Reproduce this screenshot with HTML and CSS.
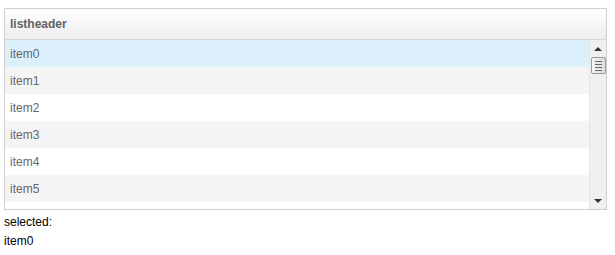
FILE: index.html
```html
<!DOCTYPE html>
<html lang="en">
<head>
    <meta charset="UTF-8">
    <title>List</title>
    <link rel="stylesheet" href="styles.css">
</head>
<body>
    <div class="listbox">
        <div class="list-header">listheader</div>
        <div class="list-body">
            <div class="list-items">
                <div class="list-item selected">item0</div>
                <div class="list-item odd">item1</div>
                <div class="list-item">item2</div>
                <div class="list-item odd">item3</div>
                <div class="list-item">item4</div>
                <div class="list-item odd">item5</div>
            </div>
            <div class="scrollbar">
                <div class="arrow arrow-up"></div>
                <div class="thumb">
                    <span></span><span></span><span></span><span></span>
                </div>
                <div class="track"></div>
                <div class="arrow arrow-down"></div>
            </div>
        </div>
    </div>
    <div class="result">
        <div>selected:</div>
        <div>item0</div>
    </div>
</body>
</html>
```

FILE: styles.css
```css
* {
    margin: 0;
    padding: 0;
    box-sizing: border-box;
}

body {
    margin: 8px 0 0 4px;
    font-family: "Liberation Sans", Arial, sans-serif;
    font-size: 12px;
    color: #000;
    background: #fff;
}

.listbox {
    width: 603px;
    height: 202px;
    border: 1px solid #cfcfcf;
    display: flex;
    flex-direction: column;
}

.list-header {
    height: 31px;
    padding: 0 5px;
    line-height: 30px;
    font-weight: bold;
    color: #636363;
    background: linear-gradient(#ffffff, #ededed);
    border-bottom: 1px solid #d6d6d6;
}

.list-body {
    flex: 1;
    display: flex;
    overflow: hidden;
}

.list-items {
    flex: 1;
}

.list-item {
    height: 27px;
    padding: 2px 5px 0;
    line-height: 25px;
    color: #666;
}

.list-item.odd {
    background: #f5f5f5;
}

.list-item.selected {
    background: #dcf0fb;
}

.scrollbar {
    width: 17px;
    display: flex;
    flex-direction: column;
    align-items: center;
    background: #f0f0f0;
    border-left: 1px solid #e6e6e6;
}

.arrow {
    height: 17px;
    width: 100%;
    display: flex;
    align-items: center;
    justify-content: center;
}

.arrow::after {
    content: '';
    border-left: 4px solid transparent;
    border-right: 4px solid transparent;
}

.arrow-up::after {
    border-bottom: 4px solid #333;
}

.arrow-down::after {
    border-top: 4px solid #333;
}

.thumb {
    width: 15px;
    height: 17px;
    border: 1px solid #9a9a9a;
    border-radius: 2px;
    background: linear-gradient(90deg, #f4f4f4, #dcdcdc);
    display: flex;
    flex-direction: column;
    justify-content: center;
    align-items: center;
    gap: 2px;
}

.thumb span {
    width: 7px;
    height: 1px;
    background: #666;
}

.track {
    flex: 1;
}

.result {
    margin-top: 3px;
    line-height: 19px;
}
```
